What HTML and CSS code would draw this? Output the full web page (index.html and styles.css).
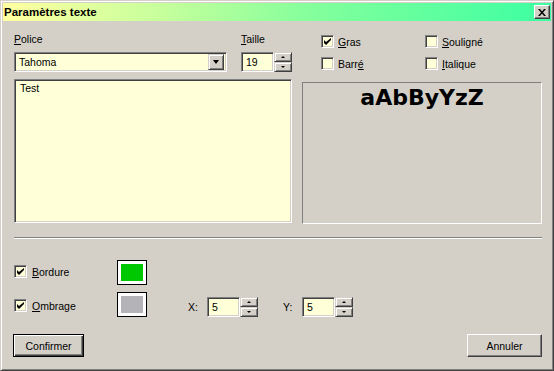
FILE: index.html
```html
<!DOCTYPE html>
<html lang="fr">

<head>
    <meta charset="UTF-8">
    <title>Paramètres texte</title>
    <link rel="stylesheet" href="styles.css">
</head>

<body>
    <div class="window">
        <div class="titlebar">
            <span class="title">Paramètres texte</span>
            <span class="close">
                <svg width="8" height="7" viewBox="0 0 8 7"><path d="M0 0h2l2 2.5 2-2.5h2l-3 3.5 3 3.5h-2l-2-2.5-2 2.5h-2l3-3.5z" /></svg>
            </span>
        </div>

        <div class="content">
            <div class="top">
                <div class="font_col">
                    <div class="fields">
                        <div class="field police">
                            <label><u>P</u>olice</label>
                            <div class="combo">
                                <span class="combo_value">Tahoma</span>
                                <span class="combo_btn"><span class="tri_down"></span></span>
                            </div>
                        </div>
                        <div class="field taille">
                            <label><u>T</u>aille</label>
                            <div class="spin">
                                <span class="spin_value">19</span>
                                <span class="spin_btns">
                                    <span class="spin_btn"><span class="mini_up"></span></span>
                                    <span class="spin_btn"><span class="mini_down"></span></span>
                                </span>
                            </div>
                        </div>
                    </div>
                    <div class="textbox">Test</div>
                </div>

                <div class="style_col">
                    <div class="checks">
                        <label class="check"><span class="box checked"><svg width="7" height="7" viewBox="0 0 7 7"><path d="M0 2l2 2 5-4v2l-5 5-2-2z" /></svg></span><span><u>G</u>ras</span></label>
                        <label class="check"><span class="box"></span><span><u>S</u>ouligné</span></label>
                        <label class="check"><span class="box"></span><span>Barr<u>é</u></span></label>
                        <label class="check"><span class="box"></span><span><u>I</u>talique</span></label>
                    </div>
                    <div class="preview">aAbByYzZ</div>
                </div>
            </div>

            <div class="separator"></div>

            <div class="effects">
                <div class="effect_row">
                    <label class="check effect_check"><span class="box checked"><svg width="7" height="7" viewBox="0 0 7 7"><path d="M0 2l2 2 5-4v2l-5 5-2-2z" /></svg></span><span><u>B</u>ordure</span></label>
                    <span class="swatch"><span class="swatch_fill green"></span></span>
                </div>
                <div class="effect_row">
                    <label class="check effect_check second"><span class="box checked"><svg width="7" height="7" viewBox="0 0 7 7"><path d="M0 2l2 2 5-4v2l-5 5-2-2z" /></svg></span><span><u>O</u>mbrage</span></label>
                    <span class="swatch"><span class="swatch_fill grey"></span></span>

                    <div class="offset x_offset">
                        <span class="offset_label">X:</span>
                        <div class="spin small">
                            <span class="spin_value">5</span>
                            <span class="spin_btns">
                                <span class="spin_btn"><span class="mini_up"></span></span>
                                <span class="spin_btn"><span class="mini_down"></span></span>
                            </span>
                        </div>
                    </div>
                    <div class="offset y_offset">
                        <span class="offset_label">Y:</span>
                        <div class="spin small">
                            <span class="spin_value">5</span>
                            <span class="spin_btns">
                                <span class="spin_btn"><span class="mini_up"></span></span>
                                <span class="spin_btn"><span class="mini_down"></span></span>
                            </span>
                        </div>
                    </div>
                </div>
            </div>

            <div class="buttons">
                <button class="btn default">Confirmer</button>
                <button class="btn cancel">Annuler</button>
            </div>
        </div>
    </div>
</body>

</html>
```

FILE: styles.css
```css
html, body {margin: 0; background: #d4d0c8;}
body {font-family: "Liberation Sans", Arial, sans-serif; font-size: 10.5px; color: #000;}
u {text-decoration: underline; text-underline-offset: 1px;}

.window {
    width: 554px;
    height: 371px;
    box-sizing: border-box;
    border: 1px solid;
    border-color: #d4d0c8 #404040 #404040 #d4d0c8;
    box-shadow: inset 1px 1px #fff, inset -1px -1px #808080;
    padding: 2px 2px 0 2px;
    display: flex;
    flex-direction: column;
}

/* title bar */
.titlebar {
    height: 18px;
    display: flex;
    align-items: center;
    justify-content: space-between;
    padding: 0 1px 0 1px;
    background: linear-gradient(to right, #ffffa0, #c4ff9c 30%, #86ff9c 55%, #3cffa2);
}
.title {font-weight: bold; font-size: 11.5px; line-height: 18px;}
.close {
    width: 16px;
    height: 14px;
    box-sizing: border-box;
    display: flex;
    align-items: center;
    justify-content: center;
    background: #d4d0c8;
    border: 1px solid;
    border-color: #fff #404040 #404040 #fff;
    box-shadow: inset -1px -1px #808080;
}
.close svg {display: block;}

.content {padding: 12px 9px 0 11px; display: flex; flex-direction: column;}

/* upper part */
.top {display: flex; gap: 10px;}
.font_col {width: 278px;}
.fields {display: flex; gap: 14px;}
.field label {display: block; height: 13px; line-height: 13px; margin-bottom: 6px;}
.police {width: 215px;}

.combo, .spin_value, .textbox {
    background: #ffffd8;
    border: 1px solid;
    border-color: #808080 #fff #fff #808080;
    box-shadow: inset 1px 1px #404040, inset -1px -1px #d4d0c8;
    box-sizing: border-box;
}
.combo {height: 20px; display: flex; align-items: center; padding: 2px;}
.combo_value {flex: 1; padding-left: 2px; line-height: 16px;}
.combo_btn {
    width: 16px;
    height: 16px;
    box-sizing: border-box;
    background: #d4d0c8;
    border: 1px solid;
    border-color: #d4d0c8 #404040 #404040 #d4d0c8;
    box-shadow: inset 1px 1px #fff, inset -1px -1px #808080;
    display: flex;
    align-items: center;
    justify-content: center;
}
.tri_down {width: 0; height: 0; border-left: 3.5px solid transparent; border-right: 3.5px solid transparent; border-top: 4px solid #000;}

.spin {display: flex; height: 20px;}
.taille .spin {width: 51px;}
.spin_value {flex: 1; padding: 0 0 0 4px; line-height: 18px;}
.spin_btns {width: 18px; display: flex; flex-direction: column;}
.spin_btn {
    flex: 1;
    box-sizing: border-box;
    background: #d4d0c8;
    border: 1px solid;
    border-color: #d4d0c8 #404040 #404040 #d4d0c8;
    box-shadow: inset 1px 1px #fff, inset -1px -1px #808080;
    display: flex;
    align-items: center;
    justify-content: center;
}
.mini_up {width: 0; height: 0; border-left: 2px solid transparent; border-right: 2px solid transparent; border-bottom: 2px solid #000;}
.mini_down {width: 0; height: 0; border-left: 2px solid transparent; border-right: 2px solid transparent; border-top: 2px solid #000;}

.textbox {margin-top: 7px; height: 144px; padding: 2px 5px; line-height: 12px;}

.style_col {width: 240px;}
.checks {display: grid; grid-template-columns: 104px 1fr; row-gap: 9px; padding: 2px 0 0 19px;}
.check {display: flex; align-items: center; gap: 4px; height: 13px;}
.box {
    width: 13px;
    height: 13px;
    box-sizing: border-box;
    background: #ffffd8;
    border: 1px solid;
    border-color: #808080 #fff #fff #808080;
    box-shadow: inset 1px 1px #404040, inset -1px -1px #d4d0c8;
    display: flex;
    align-items: center;
    justify-content: center;
}
.box svg {display: block;}

.preview {
    margin-top: 12px;
    height: 142px;
    box-sizing: border-box;
    border: 1px solid;
    border-color: #808080 #fff #fff #808080;
    text-align: center;
    font-family: "DejaVu Sans", sans-serif;
    font-weight: bold;
    font-size: 22px;
    line-height: 26px;
    padding-top: 2px;
}

.separator {margin-top: 13px; height: 1px; border-top: 1px solid #808080; border-bottom: 1px solid #fff; height: 0;}

/* bottom part */
.effects {margin-top: 21px; display: flex; flex-direction: column; gap: 7px;}
.effect_row {display: flex; align-items: flex-start; height: 25px;}
.effect_check {width: 103px; margin-top: 5px; gap: 5px;}
.effect_check.second {margin-top: 7px;}
.swatch {
    width: 30px;
    height: 25px;
    box-sizing: border-box;
    border: 1px solid #000;
    background: #fff;
    padding: 3px;
}
.swatch_fill {display: block; height: 100%;}
.green {background: #00c800;}
.grey {background: #b4b4b8;}

.offset {display: flex; align-items: center; margin-top: 5px;}
.x_offset {margin-left: 41px;}
.y_offset {margin-left: 25px;}
.offset_label {width: 19px;}
.spin.small {width: 51px;}

.buttons {margin-top: 17px; display: flex; justify-content: space-between;}
.btn {
    height: 23px;
    box-sizing: border-box;
    font: inherit;
    color: #000;
    background: #d4d0c8;
    border: 1px solid;
    border-color: #fff #404040 #404040 #fff;
    box-shadow: inset -1px -1px #808080;
    padding: 0;
}
.btn.default {width: 71px; margin-left: -1px; border: 1px solid #000; box-shadow: inset 1px 1px #fff, inset -1px -1px #404040, inset -2px -2px #808080;}
.btn.cancel {width: 75px;}
```
